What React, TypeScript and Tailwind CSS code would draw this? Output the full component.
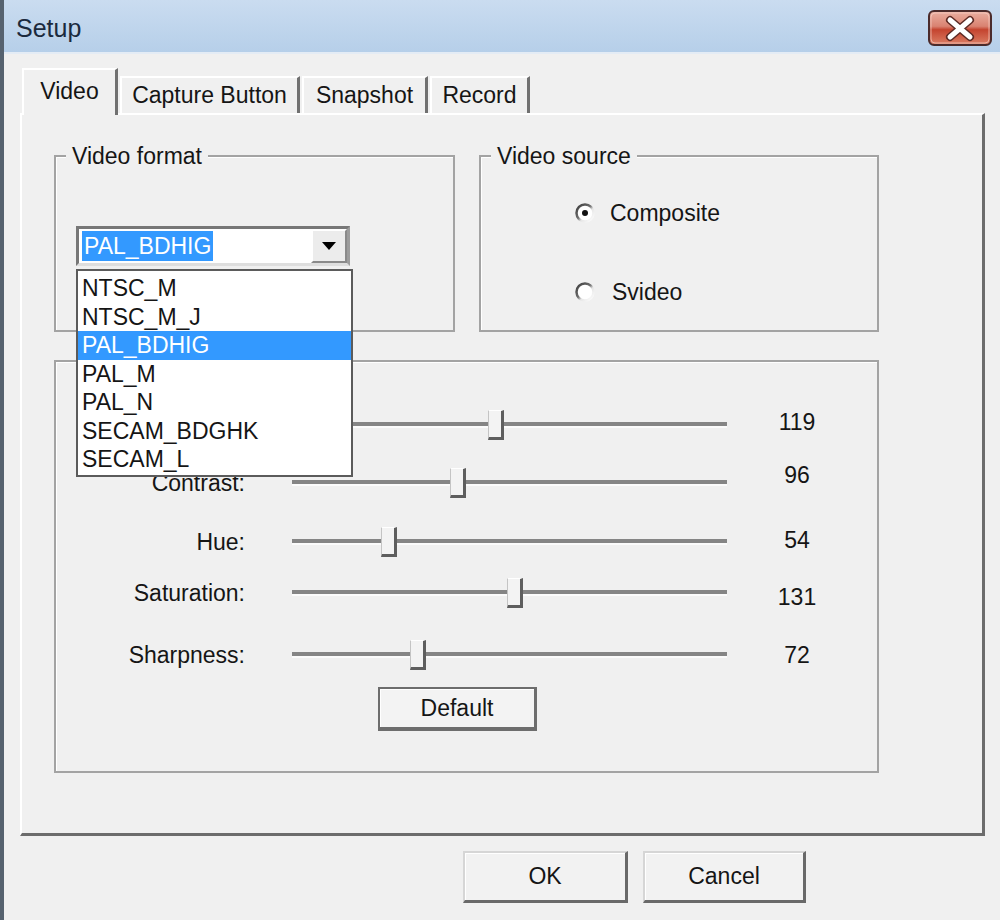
import React from 'react';

type SliderRow = { label: string; value: number; rowClass: string; valueClass: string };

const formats = ['NTSC_M', 'NTSC_M_J', 'PAL_BDHIG', 'PAL_M', 'PAL_N', 'SECAM_BDGHK', 'SECAM_L'];

// first row's label sits under the open dropdown in the screenshot
const sliders: SliderRow[] = [
  { label: '', value: 119, rowClass: 'mt-[48px]', valueClass: '-translate-y-[3px]' },
  { label: 'Contrast:', value: 96, rowClass: 'mt-[28px]', valueClass: '-translate-y-[8px]' },
  { label: 'Hue:', value: 54, rowClass: 'mt-[29px]', valueClass: '-translate-y-[2px]' },
  { label: 'Saturation:', value: 131, rowClass: 'mt-[21px]', valueClass: 'translate-y-[4px]' },
  { label: 'Sharpness:', value: 72, rowClass: 'mt-[32px]', valueClass: '' },
];

const CloseButton = () => (
  <svg width="64" height="36" viewBox="0 0 64 36">
    <defs>
      <linearGradient id="closeGrad" x1="0" y1="0" x2="0" y2="1">
        <stop offset="0" stopColor="#eab1a3" />
        <stop offset="0.45" stopColor="#d98271" />
        <stop offset="0.55" stopColor="#c4442f" />
        <stop offset="1" stopColor="#dc8066" />
      </linearGradient>
    </defs>
    <rect x="1" y="1" width="62" height="34" rx="5" fill="url(#closeGrad)" stroke="#4b2b2b" strokeWidth="2" />
    <rect x="3" y="3" width="58" height="30" rx="4" fill="none" stroke="#f6d0c6" strokeWidth="1" opacity="0.7" />
    <path d="M22 10 L42 27 M42 10 L22 27" stroke="#5c2a24" strokeWidth="8" strokeLinecap="round" />
    <path d="M22 10 L42 27 M42 10 L22 27" stroke="#ffffff" strokeWidth="5" strokeLinecap="round" />
  </svg>
);

const Radio = ({ checked }: { checked?: boolean }) => (
  <svg width="20" height="20" viewBox="0 0 20 20">
    <defs>
      <linearGradient id={checked ? 'rg1' : 'rg2'} x1="0" y1="0" x2="1" y2="1">
        <stop offset="0" stopColor="#3c3c3c" />
        <stop offset="0.45" stopColor="#6e6e6e" />
        <stop offset="0.6" stopColor="#e6e6e6" />
        <stop offset="1" stopColor="#ffffff" />
      </linearGradient>
    </defs>
    <circle cx="10" cy="10" r="8.5" fill="#ffffff" stroke={`url(#${checked ? 'rg1' : 'rg2'})`} strokeWidth="2.5" />
    {checked && <circle cx="10" cy="10" r="3" fill="#111111" />}
  </svg>
);

const Tab = ({ label, active, className }: { label: string; active?: boolean; className: string }) => (
  <div
    className={`flex justify-center border-l-2 border-t-2 border-white border-r-[3px] border-r-[#707070] bg-[#f0f0f0] ${
      active ? 'relative z-10 h-[47px] -mb-[2px] pt-[8px]' : 'h-[37px] pt-[4px]'
    } ${className}`}
  >
    <span className="leading-[26px]">{label}</span>
  </div>
);

const GroupBox = ({ label, className, children }: { label?: string; className: string; children?: React.ReactNode }) => (
  <div className={`relative border-2 border-[#a3a3a3] shadow-[inset_1px_1px_0_#ffffff] ${className}`}>
    {label && (
      <span className="absolute -top-[14px] left-[10px] px-[6px] bg-[#f0f0f0] leading-[26px]">{label}</span>
    )}
    {children}
  </div>
);

const Button = ({ label, className }: { label: string; className: string }) => (
  <div
    className={`flex items-center justify-center bg-[#f2f2f2] border-l-2 border-t-2 border-[#d6d6d6] border-r-[3px] border-b-[3px] border-r-[#696969] border-b-[#696969] shadow-[inset_1px_1px_0_#ffffff] ${className}`}
  >
    {label}
  </div>
);

const App: React.FC = () => {
  return (
    <div className="w-[1000px] h-[920px] overflow-hidden bg-[#f0f0f0] border-l-4 border-[#56626f] font-['Liberation_Sans',Arial,sans-serif] text-[23px] text-[#151515] flex flex-col">
      {/* Title bar */}
      <div className="h-[54px] shrink-0 bg-gradient-to-b from-[#cadcf0] to-[#b6cfe9] border-b-2 border-[#e4ecf5] flex items-start justify-between pl-[12px] pr-[8px] pt-[10px]">
        <span className="text-[25px] leading-[36px] text-[#1b2a3d]">Setup</span>
        <CloseButton />
      </div>

      {/* Tabs */}
      <div className="mt-[14px] ml-[18px] h-[45px] flex items-end">
        <Tab label="Video" active className="w-[96px]" />
        <Tab label="Capture Button" className="w-[180px] ml-[2px]" />
        <Tab label="Snapshot" className="w-[126px] ml-[2px]" />
        <Tab label="Record" className="w-[100px] ml-[2px]" />
      </div>

      {/* Tab panel */}
      <div className="ml-[16px] w-[965px] h-[723px] shrink-0 border-t-2 border-l-2 border-white border-r-[3px] border-b-[3px] border-r-[#6c6c6c] border-b-[#6c6c6c]">
        <div className="flex gap-[24px] ml-[32px] mt-[40px]">
          <GroupBox label="Video format" className="w-[401px] h-[177px]">
            <div className="relative ml-[20px] mt-[69px] w-[274px] h-[40px] bg-white border-[3px] border-[#777777] border-b-[#dedede] border-r-[#9c9c9c] flex">
              <div className="flex-1 flex items-center pl-[3px]">
                <span className="bg-[#3399ff] text-white leading-[30px] px-[2px]">PAL_BDHIG</span>
              </div>
              <div className="w-[36px] h-full bg-[#ececec] border-l-2 border-t-2 border-white border-r-2 border-b-2 border-r-[#8a8a8a] border-b-[#8a8a8a] flex items-center justify-center">
                <svg width="14" height="8" viewBox="0 0 14 8">
                  <path d="M0 0 H14 L7 8 Z" fill="#000000" />
                </svg>
              </div>

              {/* Open dropdown list */}
              <div className="absolute top-[40px] -left-[3px] z-20 w-[277px] bg-white border-2 border-[#5b5b5b] pt-[3px] pb-[1px]">
                {formats.map((f) => (
                  <div
                    key={f}
                    className={`h-[28.5px] leading-[28.5px] pl-[4px] ${f === 'PAL_BDHIG' ? 'bg-[#3399ff] text-white' : ''}`}
                  >
                    {f}
                  </div>
                ))}
              </div>
            </div>
          </GroupBox>

          <GroupBox label="Video source" className="w-[400px] h-[177px]">
            <div className="ml-[94px] mt-[42px] h-[28px] flex items-center gap-[15px]">
              <Radio checked />
              <span>Composite</span>
            </div>
            <div className="ml-[94px] mt-[51px] h-[28px] flex items-center gap-[17px]">
              <Radio />
              <span>Svideo</span>
            </div>
          </GroupBox>
        </div>

        <GroupBox className="ml-[32px] mt-[28px] w-[825px] h-[413px]">
          {sliders.map((s) => (
            <div key={s.value} className={`flex items-center h-[30px] ${s.rowClass}`}>
              <div className="w-[189px] text-right">{s.label}</div>
              <div className="relative ml-[47px] w-[435px] h-[30px] flex items-center">
                <div className="w-full h-[6px] bg-[#858585] border-b-2 border-[#fbfbfb]" />
                <div
                  className="absolute top-0 w-[16px] h-[30px] bg-[#f3f3f3] border-l border-t border-l-[#c4c4c4] border-t-white border-r-[3px] border-b-[3px] border-r-[#5e5e5e] border-b-[#5e5e5e]"
                  style={{ left: `${(s.value / 255) * 419}px` }}
                />
              </div>
              <div className={`ml-[50px] w-[40px] text-center ${s.valueClass}`}>{s.value}</div>
            </div>
          ))}
          <div className="ml-[322px] mt-[17px] w-[159px] h-[44px] flex items-center justify-center bg-[#f3f3f3] border-2 border-[#6d6d6d] border-r-[3px] border-b-[4px] shadow-[inset_1px_1px_0_#ffffff]">
            Default
          </div>
        </GroupBox>
      </div>

      {/* Dialog buttons */}
      <div className="mt-[15px] ml-[459px] flex gap-[15px]">
        <Button label="OK" className="w-[165px] h-[52px]" />
        <Button label="Cancel" className="w-[163px] h-[52px]" />
      </div>
    </div>
  );
};

export default App;
